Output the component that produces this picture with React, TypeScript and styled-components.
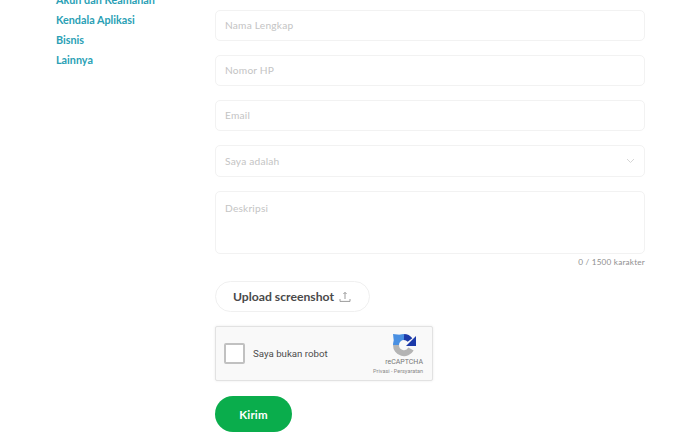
import React from 'react';
import styled, {createGlobalStyle} from 'styled-components';

const GlobalStyle = createGlobalStyle`
    html, body {
        margin: 0;
        padding: 0;
        background: #ffffff;
        overflow: hidden;
    }
    body {
        font-family: 'Lato', 'Liberation Sans', sans-serif;
    }
`;

const Page = styled.div`
    display: flex;
    width: 700px;
    height: 444px;
    overflow: hidden;
    padding-left: 56px;
    box-sizing: border-box;
`;

const Sidebar = styled.nav`
    width: 159px;
    flex-shrink: 0;
    display: flex;
    flex-direction: column;
    margin-top: -10px;
`;

const SideLink = styled.a`
    height: 20px;
    line-height: 20px;
    font-size: 10.8px;
    font-weight: 700;
    color: #2a9fb5;
    white-space: nowrap;
`;

const Form = styled.form`
    width: 430px;
    padding-top: 10px;
    display: flex;
    flex-direction: column;
`;

const Field = styled.div<{$height?: number; $top?: boolean}>`
    height: ${p => p.$height ?? 31}px;
    box-sizing: border-box;
    border: 1px solid #f2f2f2;
    border-radius: 5px;
    margin-bottom: 14px;
    padding: ${p => (p.$top ? '10px' : '0')} 9px 0;
    display: flex;
    align-items: ${p => (p.$top ? 'flex-start' : 'center')};
    justify-content: space-between;
    font-size: 10.2px;
    line-height: 13px;
    letter-spacing: 0.2px;
    color: #c4c4c4;
`;

const Counter = styled.div`
    margin-top: -13px;
    height: 14px;
    line-height: 14px;
    text-align: right;
    font-size: 8.2px;
    letter-spacing: 0.2px;
    color: #8f8f8f;
`;

const UploadButton = styled.button`
    margin-top: 12px;
    width: 155px;
    height: 31px;
    box-sizing: border-box;
    border: 1px solid #f0f0f0;
    border-radius: 16px;
    background: #ffffff;
    padding: 0 0 0 17px;
    display: flex;
    align-items: center;
    gap: 5px;
    font-family: inherit;
    font-size: 12.2px;
    font-weight: 700;
    color: #4a4a4a;
`;

const Captcha = styled.div`
    margin-top: 14px;
    width: 218px;
    height: 55px;
    box-sizing: border-box;
    background: #f9f9f9;
    border: 1px solid #e2e2e2;
    box-shadow: 0 0 3px rgba(0, 0, 0, 0.08);
    border-radius: 2px;
    padding: 0 9px 0 8px;
    display: flex;
    align-items: center;
    font-family: 'Roboto', 'Liberation Sans', sans-serif;
`;

const CaptchaBox = styled.div`
    width: 21px;
    height: 21px;
    box-sizing: border-box;
    border: 2px solid #c1c1c1;
    border-radius: 2px;
    background: #ffffff;
    margin-right: 8px;
`;

const CaptchaLabel = styled.span`
    flex: 1;
    font-size: 9.7px;
    color: #4c4c4c;
`;

const CaptchaBrand = styled.div`
    display: flex;
    flex-direction: column;
    align-items: flex-end;
    color: #777777;
`;

const BrandName = styled.span`
    font-size: 7px;
    line-height: 9px;
    margin-top: 1px;
`;

const BrandLinks = styled.span`
    font-size: 5.5px;
    line-height: 8px;
    color: #8a8a8a;
`;

const LogoWrap = styled.div`
    width: 24px;
    height: 24px;
    margin-right: 7px;
`;

const SubmitButton = styled.button`
    margin-top: 15px;
    width: 77px;
    height: 36px;
    border: 0;
    border-radius: 18px;
    background: #0aad4c;
    color: #ffffff;
    font-family: inherit;
    font-size: 11.5px;
    font-weight: 700;
    letter-spacing: 0.2px;
`;

const links = ['Akun dan Keamanan', 'Kendala Aplikasi', 'Bisnis', 'Lainnya'];

const ChevronIcon = () => (
    <svg width="9" height="6" viewBox="0 0 9 6" fill="none">
        <path d="M1 1l3.5 3.5L8 1" stroke="#d6d6d6" strokeWidth="1" />
    </svg>
);

const UploadIcon = () => (
    <svg width="12" height="12" viewBox="0 0 12 12" fill="none" stroke="#909090" strokeWidth="0.9">
        <path d="M6 8V1.5M4.4 3L6 1.4 7.6 3" />
        <path d="M1 8v2.4h10V8" />
    </svg>
);

const RecaptchaLogo = () => (
    <svg width="24" height="24" viewBox="0 0 24 24" fill="none">
        <path d="M4 12a8 8 0 0 0 15 4" stroke="#b4b4b4" strokeWidth="6" />
        <path d="M4 12a8 8 0 0 1 8-8" stroke="#4a90e2" strokeWidth="6" />
        <path d="M1 1l9 1-8 8z" fill="#4a90e2" />
        <path d="M12 4a8 8 0 0 1 6 3" stroke="#1c3aa9" strokeWidth="6" />
        <path d="M24 3v10H14z" fill="#1c3aa9" />
    </svg>
);

const App = () => {
    return (
        <Page>
            <GlobalStyle />
            <Sidebar>
                {links.map(link => (
                    <SideLink key={link}>{link}</SideLink>
                ))}
            </Sidebar>
            <Form>
                <Field>Nama Lengkap</Field>
                <Field>Nomor HP</Field>
                <Field>Email</Field>
                <Field $height={32}>
                    Saya adalah
                    <ChevronIcon />
                </Field>
                <Field $height={63} $top>Deskripsi</Field>
                <Counter>0 / 1500 karakter</Counter>
                <UploadButton type="button">
                    Upload screenshot
                    <UploadIcon />
                </UploadButton>
                <Captcha>
                    <CaptchaBox />
                    <CaptchaLabel>Saya bukan robot</CaptchaLabel>
                    <CaptchaBrand>
                        <LogoWrap>
                            <RecaptchaLogo />
                        </LogoWrap>
                        <BrandName>reCAPTCHA</BrandName>
                        <BrandLinks>Privasi - Persyaratan</BrandLinks>
                    </CaptchaBrand>
                </Captcha>
                <SubmitButton type="button">Kirim</SubmitButton>
            </Form>
        </Page>
    );
};

export default App;
